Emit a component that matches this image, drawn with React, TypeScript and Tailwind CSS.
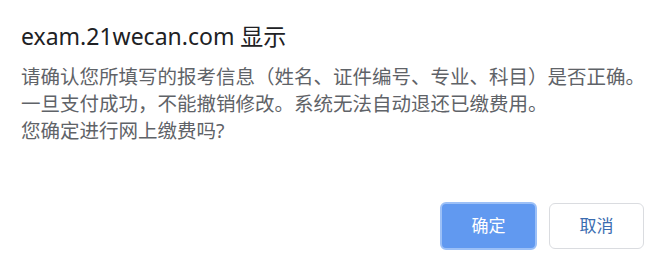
export default function App() {
  return (
    <div
      className="w-[663px] h-[257px] bg-white flex flex-col"
      style={{ fontFamily: '"Noto Sans", "Noto Sans CJK SC", sans-serif' }}
    >
      <div className="pl-[21px] pt-[21px]">
        <h1 className="text-[23px] leading-[30px] text-[#202124]">exam.21wecan.com 显示</h1>
        <div className="mt-[12px] text-[19.5px] leading-[27px] text-[#5f6368]">
          <p>请确认您所填写的报考信息（姓名、证件编号、专业、科目）是否正确。</p>
          <p>一旦支付成功，不能撤销修改。系统无法自动退还已缴费用。</p>
          <p>您确定进行网上缴费吗?</p>
        </div>
      </div>
      <div className="flex-1" />
      <div className="flex justify-end gap-[12px] pr-[19px] pb-[7px]">
        <button className="w-[97px] h-[48px] rounded-[6px] bg-[#6199f0] border-2 border-[#9cc0f7] text-white text-[17px]">
          确定
        </button>
        <button className="w-[95px] h-[46px] mt-[1px] rounded-[6px] bg-white border border-[#dadce0] text-[#3a6cb0] text-[17px]">
          取消
        </button>
      </div>
    </div>
  );
}
